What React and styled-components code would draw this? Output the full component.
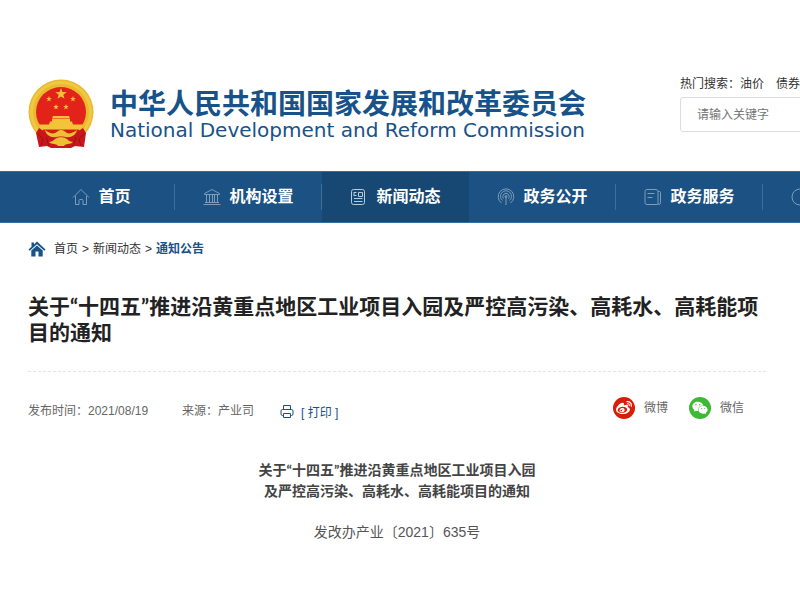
import React from 'react'
import styled, { createGlobalStyle } from 'styled-components'
import { FaWeibo, FaWeixin } from 'react-icons/fa'

const GlobalStyle = createGlobalStyle`
    * {
        box-sizing: border-box;
    }
    body {
        margin: 0;
        background-color: #fff;
        color: #333;
        font-family: "Liberation Sans", "Noto Sans CJK SC", sans-serif;
        font-size: 12px;
        line-height: 16px;
    }
    a {
        color: inherit;
        text-decoration: none;
    }
`;

const Page = styled.div`
    overflow: hidden;
`;

const Header = styled.header`
    display: flex;
    align-items: flex-start;
    padding: 76px 0 22px 28px;
`;
const Logo = styled.a`
    display: flex;
    flex: none;
    align-items: center;
    gap: 16px;
    padding-top: 3px;
    color: #17528a;
`;
const Names = styled.div`
    display: flex;
    flex-direction: column;
    padding-top: 2px;
`;
const Name = styled.span`
    font-size: 28px;
    font-weight: bold;
    line-height: 30px;
`;
const EnglishName = styled.span`
    font-family: "DejaVu Sans", sans-serif;
    font-size: 20px;
    line-height: 20px;
`;

const Search = styled.form`
    display: flex;
    flex-direction: column;
    flex: 1 0 240px;
    gap: 5px;
    margin-left: 94px;
`;
const HotWords = styled.div`
    display: flex;
    gap: 12px;
`;
const SearchInput = styled.input`
    width: 100%;
    height: 35px;
    padding: 0 16px;
    border: 1px solid #ddd;
    border-radius: 3px;
    font-family: inherit;
    font-size: 12px;

    &::placeholder {
        color: #757575;
    }
`;

const Nav = styled.nav`
    display: flex;
    height: 52px;
    padding-left: 28px;
    border-top: 1px solid #34709f;
    border-bottom: 1px solid #34709f;
    background-color: #1b5183;
`;
const NavItem = styled.a`
    display: flex;
    flex: 0 0 147px;
    align-items: center;
    justify-content: ${props => props.$start ? 'flex-start' : 'center'};
    gap: 8px;
    padding-left: ${props => props.$start ? '28px' : '0'};
    background: ${props => props.$active
        ? '#164873'
        : 'linear-gradient(#3c6f9c, #3c6f9c) right center / 1px 26px no-repeat'};
    color: #fff;
    font-size: 16px;
    font-weight: bold;

    svg {
        color: ${props => props.$active ? '#b9cbdb' : '#7d9dba'};
    }
`;

const Content = styled.main`
    margin: 0 34px 0 28px;
`;
const Breadcrumb = styled.div`
    display: flex;
    align-items: center;
    gap: 4px;
    height: 52px;

    svg {
        margin-right: 4px;
    }
`;
const Current = styled.a`
    color: #17528a;
    font-weight: bold;
`;
const Title = styled.h1`
    margin: 0;
    padding: 18px 0 26px;
    border-bottom: 1px dashed #e4e4e4;
    color: #222;
    font-family: Lato, "Noto Sans CJK SC", sans-serif;
    font-size: 21px;
    line-height: 26px;
`;

const Meta = styled.div`
    display: flex;
    align-items: center;
    padding: 26px 22px 0 0;
    color: #666;
    height: 52px;
`;
const Source = styled.span`
    margin-left: 34px;
`;
const PrintButton = styled.button`
    display: flex;
    align-items: center;
    gap: 7px;
    margin-left: 26px;
    padding: 0;
    border: none;
    background: none;
    color: #17528a;
    font-family: inherit;
    font-size: 12px;
`;
const Shares = styled.div`
    display: flex;
    gap: 21px;
    margin-left: auto;
    padding-bottom: 6px;
`;
const Share = styled.a`
    display: flex;
    align-items: center;
    gap: 9px;
`;
const Round = styled.span`
    display: flex;
    align-items: center;
    justify-content: center;
    width: 22px;
    height: 22px;
    border-radius: 50%;
    background-color: ${props => props.$color};
    color: #fff;
    font-size: 16px;
`;

const Document = styled.article`
    padding-top: 35px;
    font-size: 14px;
    line-height: 21px;
    text-align: center;
`;
const DocumentTitle = styled.h2`
    margin: 0 0 21px;
    color: #444;
    font-family: Lato, "Noto Sans CJK SC", sans-serif;
    font-size: 14px;
`;
const DocumentNumber = styled.p`
    margin: 0;
    color: #555;
`;

const star = (cx, cy, r) => {
  const points = []
  for (let i = 0; i < 10; i++) {
    const radius = i % 2 ? r * 0.4 : r
    const angle = Math.PI * (i / 5 - 0.5)
    points.push(`${cx + radius * Math.cos(angle)},${cy + radius * Math.sin(angle)}`)
  }
  return points.join(' ')
}

function Emblem(){
  return (
    <svg width="66" height="70" viewBox="0 0 66 70" aria-hidden="true">
      <circle cx="33" cy="33" r="32.5" fill="#e9b92f"/>
      <circle cx="33" cy="33" r="29.5" fill="none" stroke="#f0c843" strokeWidth="3"/>
      <circle cx="33" cy="33" r="25" fill="#e32219"/>
      <g fill="#f3c437">
        <polygon points={star(33, 15, 6)}/>
        <polygon points={star(21, 20, 3)}/>
        <polygon points={star(45, 20, 3)}/>
        <polygon points={star(28, 28, 3)}/>
        <polygon points={star(38, 28, 3)}/>
        <path d="M25 37h16l1 2.500H24zM24 40h18v3H24z"/>
        <path d="M22 42.500h22l1 3H21zM11 45.500h44l-2 5H13z"/>
      </g>
      <path d="M14 51h38l-6 6H21z" fill="#d81a16"/>
      <path d="M11 49l12 8 10 2 10-2 12-8 3 5-2 14-9-1-4 2H23l-4-2-8 1-3-14z" fill="#c9161b"/>
      <path d="M33 51c3 0 4 2 6 3s6 0 10-3c-1 5-6 8-11 7-3-1-7-1-10 0-5 1-10-2-11-7 4 3 7 4 10 3s3-3 6-3z" fill="#edbf35"/>
      <path d="M21 63c4 0 5-3 8-4h8c3 1 4 4 8 4-3 3-7 1-9 4h-6c-2-3-6-1-9-4z" fill="#edbf35"/>
      <path d="M10 55l5 5-2 7M56 55l-5 5 2 7M18 58l3 9M48 58l-3 9" fill="none" stroke="#9d0f16"/>
    </svg>
  )
}

function LineIcon({ children }){
  return (
    <svg width="18" height="18" viewBox="0 0 18 18" fill="none" stroke="currentColor" aria-hidden="true">
      {children}
    </svg>
  )
}

function HomeIcon(){
  return (
    <LineIcon>
      <path d="M1 9.500L9 1.500l8 8M3.500 8v8.500h3.500v-4q0-1 1-1h2q1 0 1 1v4h3.500V8"/>
    </LineIcon>
  )
}

function BankIcon(){
  return (
    <LineIcon>
      <path d="M1.500 5.500L9 1.500l7.500 4v1h-15zM3.500 7v8M6.500 7v8M9.500 7v8M11.500 7v8M14.500 7v8M2 14.500h14M.5 16.500h17"/>
    </LineIcon>
  )
}

function NewsIcon(){
  return (
    <LineIcon>
      <rect x="1.500" y="1.500" width="13" height="15" rx="2"/>
      <path d="M8.500 4.500h4v4h-4zM4 4.500h2.500M4 7.500h2.500M4 10.500h8.500M4 13.500h8.500M4 4v4"/>
    </LineIcon>
  )
}

function SignalIcon(){
  return (
    <LineIcon>
      <path d="M4.500 15A7.800 7.800 0 1 1 13.500 15M5.500 12.500A5.500 5.500 0 1 1 12.500 12.500M6.500 10.500A3.200 3.200 0 1 1 11.500 10.500M9 8v9"/>
      <circle cx="9" cy="8.500" r="1"/>
    </LineIcon>
  )
}

function ServiceIcon(){
  return (
    <LineIcon>
      <path d="M14 15.500q0 1-1 1H3q-2 0-2-2v-11q0-2 2-2h9q2 0 2 2v11q0 2 1 2 1.500 0 1.500-2V4.500q0-1-1-1H14M3.500 5.500h7M3.500 9.500h5"/>
    </LineIcon>
  )
}

function ChatIcon(){
  return (
    <LineIcon>
      <circle cx="9" cy="9" r="8"/>
    </LineIcon>
  )
}

function CrumbHome(){
  return (
    <svg width="18" height="16" viewBox="0 0 18 16" fill="#17528a" aria-hidden="true">
      <path d="M9 0.500l8.500 8-1.200 1.300L9 3.200 1.700 9.800 0.500 8.500l3-2.800V1.500H6v2z"/>
      <path d="M3.300 9.600L9 4.400l5.700 5.200V15.500h-4.200v-5h-3v5H3.300z"/>
    </svg>
  )
}

function PrintIcon(){
  return (
    <svg width="14" height="14" viewBox="0 0 14 14" fill="none" stroke="currentColor" aria-hidden="true">
      <path d="M3.500 5.500v-4h7v4M3 11.500h-.5q-1.500 0-1.500-1.500V7Q1 5.500 2.500 5.500h9Q13 5.500 13 7v3q0 1.500-1.500 1.500H11"/>
      <path d="M3.500 9.500h7v4h-7z"/>
    </svg>
  )
}

const links = [
  { name: '首页', Icon: HomeIcon },
  { name: '机构设置', Icon: BankIcon },
  { name: '新闻动态', Icon: NewsIcon, active: true },
  { name: '政务公开', Icon: SignalIcon },
  { name: '政务服务', Icon: ServiceIcon },
]

function App(){
  return (
    <Page>
      <GlobalStyle/>
      <Header>
        <Logo href="#">
          <Emblem/>
          <Names>
            <Name>中华人民共和国国家发展和改革委员会</Name>
            <EnglishName>National Development and Reform Commission</EnglishName>
          </Names>
        </Logo>
        <Search>
          <HotWords>
            <span>热门搜索：<a href="#">油价</a></span>
            <a href="#">债券</a>
          </HotWords>
          <SearchInput type="text" aria-label="请输入关键字" placeholder="请输入关键字"/>
        </Search>
      </Header>

      <Nav>
        {links.map(({ name, Icon, active }) => (
          <NavItem href="#" key={name} $active={active}>
            <Icon/>
            {name}
          </NavItem>
        ))}
        <NavItem href="#" aria-label="互动交流" $start>
          <ChatIcon/>
        </NavItem>
      </Nav>

      <Content>
        <Breadcrumb>
          <CrumbHome/>
          <a href="#">首页</a>
          <span>&gt;</span>
          <a href="#">新闻动态</a>
          <span>&gt;</span>
          <Current href="#">通知公告</Current>
        </Breadcrumb>
        <Title>关于“十四五”推进沿黄重点地区工业项目入园及严控高污染、高耗水、高耗能项目的通知</Title>
        <Meta>
          <span>发布时间：2021/08/19</span>
          <Source>来源：产业司</Source>
          <PrintButton type="button">
            <PrintIcon/>
            [ 打印 ]
          </PrintButton>
          <Shares>
            <Share href="#">
              <Round $color="#d81e06"><FaWeibo/></Round>
              微博
            </Share>
            <Share href="#">
              <Round $color="#3eb935"><FaWeixin/></Round>
              微信
            </Share>
          </Shares>
        </Meta>
        <Document>
          <DocumentTitle>
            关于“十四五”推进沿黄重点地区工业项目入园<br/>
            及严控高污染、高耗水、高耗能项目的通知
          </DocumentTitle>
          <DocumentNumber>发改办产业〔2021〕635号</DocumentNumber>
        </Document>
      </Content>
    </Page>
  )
}

export default App
